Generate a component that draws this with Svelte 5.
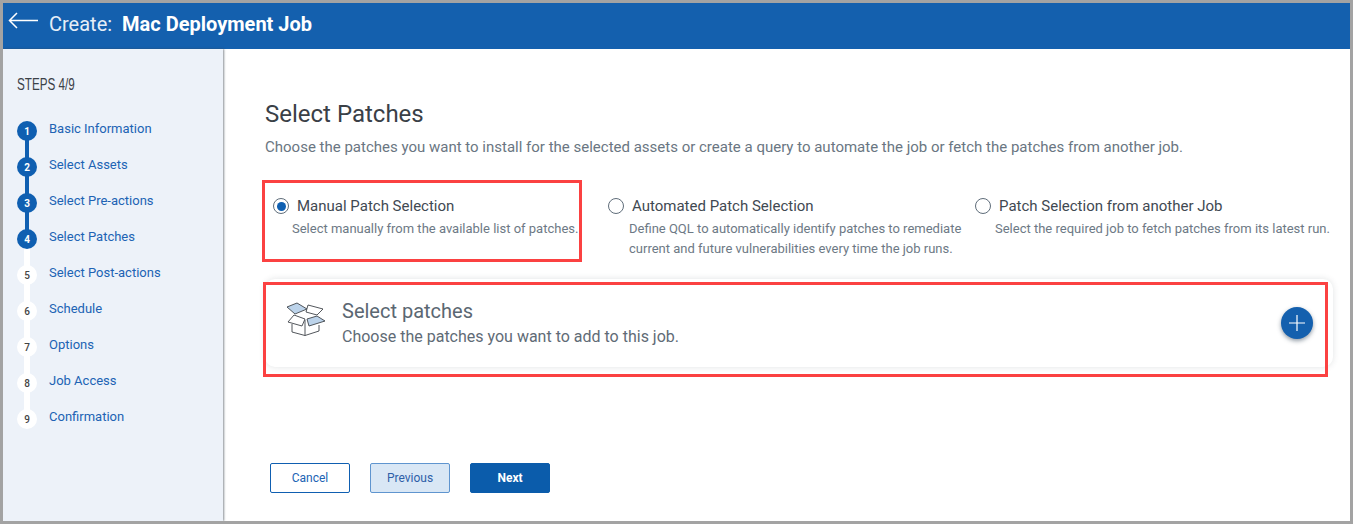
<script>
  const steps = [
    "Basic Information",
    "Select Assets",
    "Select Pre-actions",
    "Select Patches",
    "Select Post-actions",
    "Schedule",
    "Options",
    "Job Access",
    "Confirmation"
  ];
  const current = 4;

  const options = [
    {
      title: "Manual Patch Selection",
      lines: ["Select manually from the available list of patches."],
      selected: true
    },
    {
      title: "Automated Patch Selection",
      lines: [
        "Define QQL to automatically identify patches to remediate",
        "current and future vulnerabilities every time the job runs."
      ]
    },
    {
      title: "Patch Selection from another Job",
      lines: ["Select the required job to fetch patches from its latest run."]
    }
  ];
</script>

<div class="frame">
  <header class="topbar">
    <svg class="back" width="30" height="18" viewBox="0 0 30 18" fill="none" stroke="#fff" stroke-width="1.5">
      <path d="M30 8.5H1.5M9 1L1.5 8.5L9 16" />
    </svg>
    <span class="create">Create:</span>
    <span class="job">Mac Deployment Job</span>
  </header>

  <div class="body">
    <aside class="sidebar">
      <div class="steps-title">STEPS 4/9</div>
      <ol class="steps">
        {#each steps as step, i}
          <li class="step" class:done={i + 1 <= current} class:linked={i + 1 < current}>
            <span class="dot">{i + 1}</span>
            <span class="step-label">{step}</span>
          </li>
        {/each}
      </ol>
    </aside>

    <main class="content">
      <h1>Select Patches</h1>
      <p class="intro">Choose the patches you want to install for the selected assets or create a query to automate the job or fetch the patches from another job.</p>

      <div class="options">
        {#each options as opt}
          <div class="option">
            <div class="option-head">
              <span class="radio" class:on={opt.selected}></span>
              <span class="option-title">{opt.title}</span>
            </div>
            <div class="option-desc">
              {#each opt.lines as line}
                <div>{line}</div>
              {/each}
            </div>
          </div>
        {/each}
      </div>

      <section class="card">
        <svg class="box" width="40" height="36" viewBox="0 0 40 36" fill="none" stroke="#3f444a" stroke-width="0.9" stroke-linejoin="round">
          <path d="M1 6L11 2L21 8L9 13Z" fill="#bcd3ea" />
          <path d="M22 4L37 8L31 14L20 11Z" fill="#fff" />
          <path d="M6 23V31L19 34.5L33 30V24" fill="#fff" />
          <path d="M19 19V34.5" />
          <path d="M2 21L8 14L19 18L16 25Z" fill="#fff" />
          <path d="M21 18L31 15L39 20L23 25Z" fill="#bcd3ea" />
        </svg>
        <div class="card-text">
          <div class="card-title">Select patches</div>
          <div class="card-sub">Choose the patches you want to add to this job.</div>
        </div>
        <button class="add" aria-label="Add patches">
          <svg width="16" height="16" viewBox="0 0 16 16" stroke="#fff" stroke-width="1.2">
            <path d="M8 0V16M0 8H16" />
          </svg>
        </button>
      </section>

      <div class="actions">
        <button class="btn cancel">Cancel</button>
        <button class="btn previous">Previous</button>
        <button class="btn next">Next</button>
      </div>
    </main>
  </div>

  <!-- annotation boxes drawn on top of the screenshot -->
  <div class="mark mark-radio"></div>
  <div class="mark mark-card"></div>
</div>

<style>
  :global(body) {
    margin: 0;
    background: #a3a3a3;
  }

  .frame {
    position: relative;
    width: 1347px;
    height: 518px;
    margin: 3px;
    background: #fff;
    display: flex;
    flex-direction: column;
    font-family: Roboto, "Liberation Sans", sans-serif;
    overflow: hidden;
  }

  .topbar {
    height: 46px;
    flex: none;
    background: #1460ae;
    display: flex;
    align-items: center;
    color: #fff;
    box-sizing: border-box;
    padding: 0 0 4px 5px;
  }

  .back {
    margin: 0 11px 7px 0;
  }

  .create {
    font-size: 20px;
    color: #e6eef7;
    margin-right: 10px;
  }

  .job {
    font-size: 20px;
    font-weight: 700;
  }

  .body {
    flex: 1;
    display: flex;
    min-height: 0;
  }

  .sidebar {
    width: 220px;
    flex: none;
    background: #edf2f9;
    box-shadow: 1px 0 2px rgba(60, 70, 80, 0.6);
    box-sizing: border-box;
    padding: 27px 0 0 14px;
    z-index: 1;
  }

  .steps-title {
    font-family: "Liberation Sans", sans-serif;
    font-size: 16px;
    line-height: 18px;
    color: #3b4148;
    transform: scaleX(0.73);
    transform-origin: left center;
    white-space: nowrap;
  }

  .steps {
    list-style: none;
    margin: 27px 0 0;
    padding: 0;
  }

  .step {
    position: relative;
    height: 36px;
    display: flex;
    align-items: flex-start;
  }

  .step:not(:last-child)::after {
    content: "";
    position: absolute;
    left: 7px;
    top: 14px;
    width: 6px;
    height: 28px;
    background: #fff;
  }

  .step.linked::after {
    left: 8px;
    width: 4px;
    background: #0f5fb1;
  }

  .dot {
    position: relative;
    z-index: 1;
    width: 20px;
    height: 20px;
    border-radius: 50%;
    background: #fff;
    color: #444;
    font-size: 10px;
    font-weight: 500;
    display: flex;
    align-items: center;
    justify-content: center;
    flex: none;
  }

  .step.done .dot {
    background: #0f5fb1;
    color: #fff;
    font-weight: 700;
  }

  .step-label {
    margin-left: 12px;
    font-size: 13px;
    line-height: 16px;
    color: #2063b4;
  }

  .content {
    flex: 1;
    min-width: 0;
    box-sizing: border-box;
    padding: 50px 15px 0 42px;
  }

  h1 {
    margin: 0;
    font-size: 24px;
    font-weight: 400;
    line-height: 30px;
    color: #3a4047;
  }

  .intro {
    margin: 8px 0 0;
    font-size: 15px;
    line-height: 20px;
    color: #6a7682;
    white-space: nowrap;
  }

  .options {
    display: flex;
    margin-top: 39px;
    height: 83px;
  }

  .option:nth-child(1) {
    width: 343px;
    padding-left: 8px;
    box-sizing: border-box;
  }

  .option:nth-child(2) {
    width: 367px;
  }

  .option-head {
    display: flex;
    align-items: center;
    height: 20px;
  }

  .radio {
    width: 16px;
    height: 16px;
    box-sizing: border-box;
    border: 1.4px solid #5f6d7a;
    border-radius: 50%;
    background: #fff;
    position: relative;
    flex: none;
  }

  .radio.on::after {
    content: "";
    position: absolute;
    inset: 2.5px;
    border-radius: 50%;
    background: #0f5fb1;
  }

  .option-title {
    margin-left: 8px;
    font-size: 15px;
    color: #3f4952;
  }

  .option-desc {
    margin: 3px 0 0 21px;
    font-size: 13px;
    line-height: 20px;
    color: #6d7985;
    white-space: nowrap;
  }

  .option:nth-child(1) .option-desc {
    margin-left: 19px;
  }

  .option:nth-child(3) .option-desc {
    margin-left: 20px;
  }

  .card {
    display: flex;
    align-items: center;
    height: 88px;
    width: 1068px;
    box-sizing: border-box;
    padding: 0 20px 0 21px;
    border-radius: 10px;
    background: #fff;
    box-shadow: 0 0 6px rgba(70, 80, 90, 0.16);
  }

  .box {
    flex: none;
    margin-bottom: 8px;
  }

  .card-text {
    margin-left: 16px;
    flex: 1;
  }

  .card-title {
    font-size: 20px;
    line-height: 26px;
    color: #5b6772;
  }

  .card-sub {
    font-size: 16px;
    line-height: 24px;
    margin-top: 1px;
    color: #5f6b76;
  }

  .add {
    width: 32px;
    height: 32px;
    padding: 0;
    border: 0;
    border-radius: 50%;
    background: #1460ae;
    box-shadow: 0 2px 4px rgba(40, 60, 80, 0.5);
    display: flex;
    align-items: center;
    justify-content: center;
  }

  .actions {
    display: flex;
    gap: 20px;
    margin: 96px 0 0 5px;
  }

  .btn {
    width: 80px;
    height: 30px;
    padding: 0;
    border-radius: 2px;
    font-family: inherit;
    font-size: 12px;
    box-sizing: border-box;
  }

  .cancel {
    background: #fff;
    border: 1px solid #0f5fb1;
    color: #2063b4;
  }

  .previous {
    background: #d9e7f5;
    border: 1px solid #5f95cf;
    color: #2f5fa8;
  }

  .next {
    background: #0b5cab;
    border: 1px solid #0b5cab;
    color: #fff;
    font-weight: 700;
  }

  .mark {
    position: absolute;
    border: 3px solid #fb4141;
    box-sizing: border-box;
    pointer-events: none;
    z-index: 2;
  }

  .mark-radio {
    left: 259px;
    top: 177px;
    width: 320px;
    height: 82px;
  }

  .mark-card {
    left: 260px;
    top: 279px;
    width: 1065px;
    height: 95px;
  }
</style>
